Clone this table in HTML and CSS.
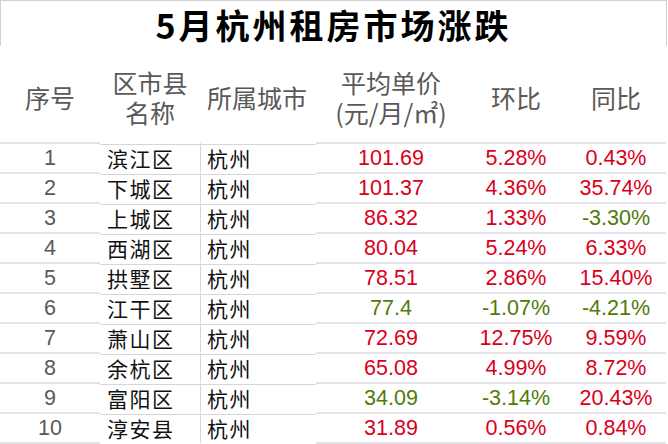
FILE: index.html
```html
<!DOCTYPE html>
<html lang="zh-CN">
<head>
<meta charset="utf-8">
<title>5月杭州租房市场涨跌</title>
<link rel="stylesheet" href="styles.css">
</head>
<body>
<div class="sheet">
  <div class="title">5月杭州租房市场涨跌</div>
  <table class="grid">
    <colgroup>
      <col class="w-no"><col class="w-dist"><col class="w-city"><col class="w-price"><col class="w-mom"><col class="w-yoy">
    </colgroup>
    <thead>
      <tr>
        <th>序号</th>
        <th>区市县<br>名称</th>
        <th class="left">所属城市</th>
        <th>平均单价<br>(元/月/㎡)</th>
        <th>环比</th>
        <th>同比</th>
      </tr>
    </thead>
    <tbody>
      <tr><td class="no">1</td><td class="dist">滨江区</td><td class="city">杭州</td><td class="num up">101.69</td><td class="num up">5.28%</td><td class="num up">0.43%</td></tr>
      <tr><td class="no">2</td><td class="dist">下城区</td><td class="city">杭州</td><td class="num up">101.37</td><td class="num up">4.36%</td><td class="num up">35.74%</td></tr>
      <tr><td class="no">3</td><td class="dist">上城区</td><td class="city">杭州</td><td class="num up">86.32</td><td class="num up">1.33%</td><td class="num down">-3.30%</td></tr>
      <tr><td class="no">4</td><td class="dist">西湖区</td><td class="city">杭州</td><td class="num up">80.04</td><td class="num up">5.24%</td><td class="num up">6.33%</td></tr>
      <tr><td class="no">5</td><td class="dist">拱墅区</td><td class="city">杭州</td><td class="num up">78.51</td><td class="num up">2.86%</td><td class="num up">15.40%</td></tr>
      <tr><td class="no">6</td><td class="dist">江干区</td><td class="city">杭州</td><td class="num down">77.4</td><td class="num down">-1.07%</td><td class="num down">-4.21%</td></tr>
      <tr><td class="no">7</td><td class="dist">萧山区</td><td class="city">杭州</td><td class="num up">72.69</td><td class="num up">12.75%</td><td class="num up">9.59%</td></tr>
      <tr><td class="no">8</td><td class="dist">余杭区</td><td class="city">杭州</td><td class="num up">65.08</td><td class="num up">4.99%</td><td class="num up">8.72%</td></tr>
      <tr><td class="no">9</td><td class="dist">富阳区</td><td class="city">杭州</td><td class="num down">34.09</td><td class="num down">-3.14%</td><td class="num up">20.43%</td></tr>
      <tr><td class="no">10</td><td class="dist">淳安县</td><td class="city">杭州</td><td class="num up">31.89</td><td class="num up">0.56%</td><td class="num up">0.84%</td></tr>
    </tbody>
  </table>
</div>
</body>
</html>
```
FILE: styles.css
```css
html, body {
  margin: 0;
  padding: 0;
  background: #fff;
}
body {
  font-family: "Liberation Sans", "Noto Sans CJK SC", sans-serif;
}
.sheet {
  width: 667px;
}
.title {
  box-sizing: border-box;
  height: 46px;
  border-top: 1px solid #d0d0d0;
  border-left: 1px solid #d0d0d0;
  border-right: 1px solid #d0d0d0;
  padding-top: 3px;
  text-align: center;
  font-family: "Noto Sans CJK SC", sans-serif;
  font-weight: 700;
  font-size: 34px;
  line-height: 42px;
  letter-spacing: 3px;
  color: #000;
}
.grid {
  width: 666px;
  table-layout: fixed;
  border-collapse: separate;
  border-spacing: 0;
}
.w-no { width: 100px; }
.w-dist { width: 100px; }
.w-city { width: 116px; }
.w-price { width: 150px; }
.w-mom { width: 100px; }
.w-yoy { width: 100px; }
.grid th {
  height: 96px;
  box-sizing: border-box;
  padding: 6px 0 0 0;
  font-family: "Noto Sans CJK SC", sans-serif;
  font-weight: 400;
  font-size: 25px;
  line-height: 30px;
  color: #595959;
  text-align: center;
  vertical-align: middle;
  white-space: nowrap;
}
.grid th.left {
  text-align: left;
  padding-left: 7px;
}
.grid td {
  height: 28px;
  padding: 0;
  border-top: 2px solid #e3e3e8;
  font-size: 21.5px;
  line-height: 28px;
  text-align: center;
  white-space: nowrap;
}
.grid tbody tr:last-child td {
  border-bottom: 2px solid #e3e3e8;
}
.grid td.no {
  color: #595959;
}
.grid td.dist,
.grid td.city {
  text-align: left;
  padding-left: 7px;
  font-family: "Noto Sans CJK SC", sans-serif;
  font-size: 21px;
  letter-spacing: 1.5px;
  color: #111;
  border-top: 2px solid #fff;
  box-shadow: inset 0 1px 0 #d6d6d6;
}
.grid tbody tr:last-child td.dist,
.grid tbody tr:last-child td.city {
  border-bottom: 2px solid #fff;
}
.grid td.city {
  border-left: 1px solid #d6d6d6;
  padding-left: 6px;
}
.grid td.up {
  color: #d9001b;
}
.grid td.down {
  color: #4f7b07;
}
```
